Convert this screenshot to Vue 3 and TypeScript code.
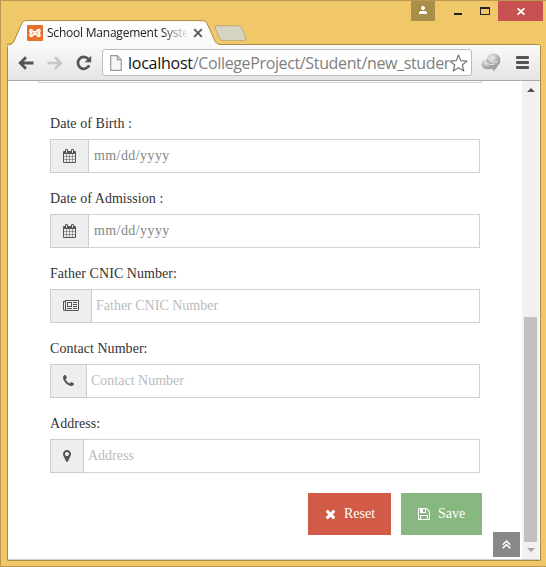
<script setup lang="ts">
interface Icon {
  box: string
  width: number
  path: string
}

interface Field {
  id: string
  label: string
  placeholder: string
  icon: Icon
  date?: boolean
}

const calendar: Icon = {
  box: '64 0 1664 1792',
  width: 13,
  path: 'M192 1664h288v-288h-288v288zm352 0h320v-288h-320v288zm-352-352h288v-320h-288v320zm352 0h320v-320h-320v320zm-352-384h288v-288h-288v288zm736 736h320v-288h-320v288zm-384-736h320v-288h-320v288zm768 736h288v-288h-288v288zm-384-352h320v-320h-320v320zm-352-864v-288q0-13-9.5-22.5t-22.5-9.5h-64q-13 0-22.5 9.5t-9.5 22.5v288q0 13 9.5 22.5t22.5 9.5h64q13 0 22.5-9.5t9.5-22.5zm736 864h288v-320h-288v320zm-384-384h320v-288h-320v288zm384 0h288v-288h-288v288zm32-480v-288q0-13-9.5-22.5t-22.5-9.5h-64q-13 0-22.5 9.5t-9.5 22.5v288q0 13 9.5 22.5t22.5 9.5h64q13 0 22.5-9.5t9.5-22.5zm384-64v1280q0 52-38 90t-90 38h-1408q-52 0-90-38t-38-90v-1280q0-52 38-90t90-38h128v-96q0-66 47-113t113-47h64q66 0 113 47t47 113v96h384v-96q0-66 47-113t113-47h64q66 0 113 47t47 113v96h128q52 0 90 38t38 90z',
}
const newspaper: Icon = {
  box: '0 0 2048 1792',
  width: 16,
  path: 'M1024 512h-384v384h384v-384zm128 640v128h-640v-128h640zm0-768v640h-640v-640h640zm640 768v128h-512v-128h512zm0-256v128h-512v-128h512zm0-256v128h-512v-128h512zm0-256v128h-512v-128h512zm-1536 960v-960h-128v960q0 26 19 45t45 19 45-19 19-45zm1664 0v-1088h-1536v1088q0 33-11 64h1483q26 0 45-19t19-45zm128-1216v1216q0 80-56 136t-136 56h-1664q-80 0-136-56t-56-136v-1088h256v-128h1792z',
}
const phone: Icon = {
  box: '192 0 1408 1792',
  width: 11,
  path: 'M1600 1240q0 27-10 70.5t-21 68.5q-21 50-122 106-94 51-186 51-27 0-53-3.5t-57.5-12.5-47-14.5-55.5-20.5-49-18q-98-35-175-83-127-79-264-216t-216-264q-48-77-83-175-3-9-18-49t-20.5-55.5-14.5-47-12.5-57.5-3.5-53q0-92 51-186 56-101 106-122 25-11 68.5-21t70.5-10q14 0 21 3 18 6 53 76 11 19 30 54t35 63.5 31 53.5q3 4 17.5 25t21.5 35.5 7 28.5q0 20-28.5 50t-62 55-62 53-28.5 46q0 9 5 22.5t8.5 20.5 14 24 11.5 19q76 137 174 235t235 174q2 1 19 11.5t24 14 20.5 8.5 22.5 5q18 0 46-28.5t53-62 55-62 50-28.5q14 0 28.5 7t35.5 21.5 25 17.5q25 15 53.5 31t63.5 35 54 30q70 35 76 53 3 7 3 21z',
}
const marker: Icon = {
  box: '384 0 1024 1792',
  width: 8,
  path: 'M1152 640q0-106-75-181t-181-75-181 75-75 181 75 181 181 75 181-75 75-181zm256 0q0 109-33 179l-364 774q-16 33-47.5 52t-67.5 19-67.5-19-46.5-52l-365-774q-33-70-33-179 0-212 150-362t362-150 362 150 150 362z',
}

const fields: Field[] = [
  { id: 'dob', label: 'Date of Birth :', placeholder: 'mm/dd/yyyy', icon: calendar, date: true },
  { id: 'doa', label: 'Date of Admission :', placeholder: 'mm/dd/yyyy', icon: calendar, date: true },
  { id: 'cnic', label: 'Father CNIC Number:', placeholder: 'Father CNIC Number', icon: newspaper },
  { id: 'contact', label: 'Contact Number:', placeholder: 'Contact Number', icon: phone },
  { id: 'address', label: 'Address:', placeholder: 'Address', icon: marker },
]
</script>

<template>
  <div class="window">
    <header class="titlebar">
      <div class="tab">
        <svg class="tab-shape" width="214" height="26" viewBox="0 0 214 26">
          <defs>
            <linearGradient id="tabFill" x1="0" y1="0" x2="0" y2="1">
              <stop offset="0" stop-color="#ffffff" />
              <stop offset="1" stop-color="#f8f8f8" />
            </linearGradient>
          </defs>
          <path d="M0 25.5C5 25 6.500 23.500 7.500 21L14.500 4Q15.500 .6 19 .6H195.500Q199 .6 200.300 4L207.500 20Q209 24.500 214 24.500V26H0Z" fill="url(#tabFill)" />
          <path d="M0 24.500C5 24 6.500 22.500 7.500 20L14.500 4Q15.500 .6 19 .6H195.500Q199 .6 200.300 4L207.500 20Q209 24.500 214 24.500" fill="none" stroke="#a98b46" />
        </svg>
        <svg class="favicon" width="16" height="16" viewBox="0 0 16 16">
          <rect width="16" height="16" rx="1" fill="#e8702a" />
          <path d="M5.500 6.200C5.500 4.600 3.200 4.200 3.200 6C3.200 7.300 4.200 7.200 4.700 8C4.200 8.800 3.200 8.700 3.200 10C3.200 11.800 5.500 11.400 6 10C6.500 8.600 9.500 8.600 10 10C10.500 11.400 12.800 11.800 12.800 10C12.800 8.700 11.800 8.800 11.300 8C11.800 7.200 12.800 7.300 12.800 6C12.800 4.200 10.500 4.600 10 6C9.500 7.400 6.500 7.400 6 6" fill="none" stroke="#fff" stroke-width="1.900" stroke-linejoin="round" />
        </svg>
        <span class="tab-title">School Management System</span>
        <svg class="tab-close" width="10" height="10" viewBox="0 0 10 10">
          <path d="M1.200 1.200L8.800 8.800M8.800 1.200L1.200 8.800" stroke="#5a5a5a" stroke-width="1.900" />
        </svg>
      </div>
      <svg class="new-tab" width="33" height="17" viewBox="0 0 33 17">
        <path d="M3 .7H24.500Q26.800 .7 27.800 3L31.600 12.500Q32.300 15.400 30 15.400H9Q6.300 15.400 5.300 13L1.200 3Q.5 .7 3 .7Z" fill="#d8d4c4" stroke="#bda976" />
      </svg>
      <div class="controls">
        <div class="user">
          <svg width="8" height="8" viewBox="0 0 8 8" shape-rendering="crispEdges">
            <path d="M3 0H5V1H6V3H5V4H3V3H2V1H3ZM1 5H7V6H8V8H0V6H1Z" fill="#fff" />
          </svg>
        </div>
        <i class="minimise"></i>
        <i class="maximise"></i>
        <div class="close">
          <svg width="8" height="7" viewBox="0 0 8 7">
            <path d="M.6 .3L7.400 6.700M7.400 .3L.6 6.700" stroke="#fff" stroke-width="1.700" />
          </svg>
        </div>
      </div>
    </header>

    <div class="browser">
      <nav class="toolbar">
        <svg class="back" width="16" height="14" viewBox="0 0 16 14">
          <path d="M15.500 7H2.500M8 1.200L2.200 7L8 12.800" fill="none" stroke="#555" stroke-width="2.800" />
        </svg>
        <svg class="forward" width="16" height="14" viewBox="0 0 16 14">
          <path d="M.5 7H13.500M8 1.200L13.800 7L8 12.800" fill="none" stroke="#c6c6c6" stroke-width="2.600" />
        </svg>
        <svg class="reload" width="16" height="16" viewBox="0 0 16 16">
          <path d="M13.200 10.300A5.900 5.900 0 1 1 12.300 4" fill="none" stroke="#555" stroke-width="2.700" />
          <path d="M15.200 .8V7.200H8.700Z" fill="#555" />
        </svg>
        <div class="omnibox">
          <svg class="page-icon" width="12" height="16" viewBox="0 0 12 16">
            <path d="M.7 .7H7.300L11.300 4.700V15.300H.7ZM7.300 .7V4.700H11.300" fill="#f7f7f7" stroke="#999" stroke-width="1.200" />
          </svg>
          <span class="url"><b>localhost</b>/CollegeProject/Student/new_student</span>
          <svg class="star" width="19" height="18" viewBox="0 0 19 18">
            <path d="M9.500 1L11.800 6.700L18 7.100L13.300 11L14.800 17L9.500 13.700L4.200 17L5.700 11L1 7.100L7.200 6.700Z" fill="#fff" stroke="#777" stroke-width="1.200" stroke-linejoin="round" />
          </svg>
        </div>
        <svg class="extension" width="20" height="19" viewBox="0 0 20 19">
          <defs>
            <radialGradient id="orb" cx=".4" cy=".3" r=".75">
              <stop offset="0" stop-color="#eeeeee" />
              <stop offset=".5" stop-color="#b9b9b9" />
              <stop offset="1" stop-color="#8d8d8d" />
            </radialGradient>
          </defs>
          <ellipse cx="7" cy="11.500" rx="6.500" ry="4.800" fill="url(#orb)" />
          <circle cx="12.500" cy="7.300" r="6.800" fill="url(#orb)" />
          <path d="M10 13H17L12.500 18.500Z" fill="#a2a2a2" />
          <path d="M4 8Q7 13 14 11M7 4Q8 10 17 9" stroke="#e6e6e6" fill="none" />
        </svg>
        <div class="menu"><i></i><i></i><i></i></div>
      </nav>

      <div class="viewport">
        <main class="page">
          <div class="previous"></div>
          <form class="form" @submit.prevent>
            <div v-for="f in fields" :key="f.id" class="field">
              <label :for="f.id">{{ f.label }}</label>
              <div class="group">
                <span class="addon">
                  <svg :width="f.icon.width" height="14" :viewBox="f.icon.box"><path :d="f.icon.path" fill="#555" /></svg>
                </span>
                <input :id="f.id" type="text" :class="{ date: f.date }" :placeholder="f.placeholder" />
              </div>
            </div>
            <div class="actions">
              <button type="reset" class="reset">
                <svg width="11" height="14" viewBox="192 0 1408 1792">
                  <path fill="#fff" d="M1490 1322q0 40-28 68l-136 136q-28 28-68 28t-68-28l-294-294-294 294q-28 28-68 28t-68-28l-136-136q-28-28-28-68t28-68l294-294-294-294q-28-28-28-68t28-68l136-136q28-28 68-28t68 28l294 294 294-294q28-28 68-28t68 28l136 136q28 28 28 68t-28 68l-294 294 294 294q28 28 28 68z" />
                </svg>
                <span>Reset</span>
              </button>
              <button type="submit" class="save">
                <svg width="12" height="14" viewBox="128 0 1536 1792">
                  <path fill="#fff" d="M512 1536h768v-384h-768v384zm896 0h128v-896q0-14-10-38.5t-20-34.5l-281-281q-10-10-34-20t-39-10v416q0 40-28 68t-68 28h-576q-40 0-68-28t-28-68v-416h-128v1280h128v-416q0-40 28-68t68-28h832q40 0 68 28t28 68v416zm-384-928v-320q0-13-9.5-22.5t-22.5-9.5h-192q-13 0-22.5 9.5t-9.5 22.5v320q0 13 9.5 22.5t22.5 9.5h192q13 0 22.5-9.5t9.5-22.5zm640 32v928q0 40-28 68t-68 28h-1344q-40 0-68-28t-28-68v-1344q0-40 28-68t68-28h928q40 0 88 20t76 48l280 280q28 28 48 76t20 88z" />
                </svg>
                <span>Save</span>
              </button>
            </div>
          </form>
          <a class="to-top">
            <svg width="9" height="9" viewBox="0 0 9 9">
              <path d="M.7 4.700L4.500 1L8.300 4.700M.7 8.300L4.500 4.600L8.300 8.300" fill="none" stroke="#fff" stroke-width="1.500" />
            </svg>
          </a>
        </main>
        <div class="scrollbar">
          <svg width="8" height="4" viewBox="0 0 8 4"><path d="M4 0L8 4H0Z" fill="#505050" /></svg>
          <div class="thumb"></div>
          <svg width="8" height="4" viewBox="0 0 8 4"><path d="M0 0H8L4 4Z" fill="#a3a3a3" /></svg>
        </div>
      </div>
    </div>
  </div>
</template>

<style>
body {
  overflow: hidden;
}
</style>

<style scoped>
* {
  box-sizing: border-box;
}
svg {
  display: block;
  flex: none;
}
.window {
  width: 546px;
  height: 567px;
  padding: 0 5px 5px 6px;
  display: flex;
  flex-direction: column;
  background: #f0c869;
  border: 1px solid #b9984f;
  border-right: 0;
}
.titlebar {
  height: 43px;
  flex: none;
  display: flex;
  align-items: flex-start;
}
.tab {
  position: relative;
  z-index: 1;
  width: 214px;
  height: 26px;
  margin-top: 19px;
  padding-left: 20px;
  flex: none;
  display: flex;
  align-items: center;
}
.tab-shape {
  position: absolute;
  left: 0;
  top: 0;
}
.favicon {
  position: relative;
}
.tab-title {
  position: relative;
  width: 140px;
  margin-left: 4px;
  overflow: hidden;
  white-space: nowrap;
  font: 12px/18px "Open Sans", sans-serif;
  letter-spacing: -0.22px;
  color: #222;
  mask-image: linear-gradient(90deg, #000 115px, transparent 142px);
}
.tab-close {
  position: relative;
  margin-left: 6px;
}
.new-tab {
  margin: 24px 0 0 -7px;
}
.controls {
  display: flex;
  margin-left: auto;
  margin-right: -2px;
}
.user {
  width: 24px;
  height: 20px;
  padding: 5px 8px;
  background: #a98e4a;
}
.minimise {
  width: 8px;
  height: 2px;
  margin: 12px 0 0 19px;
  background: #222;
}
.maximise {
  width: 10px;
  height: 8px;
  margin: 6px 8px 0 18px;
  border: 1px solid #222;
  border-top-width: 2px;
}
.close {
  width: 45px;
  height: 20px;
  display: flex;
  align-items: center;
  justify-content: center;
  background: #c75050;
}
.browser {
  flex: 1;
  min-height: 0;
  display: flex;
  flex-direction: column;
  border: 1px solid #a98b46;
  border-radius: 3px 3px 1px 1px;
  background: #fff;
}
.toolbar {
  height: 36px;
  flex: none;
  display: flex;
  align-items: center;
  padding: 0 10px;
  border-bottom: 1px solid #a9a9a9;
  border-radius: 2px 2px 0 0;
  background: linear-gradient(#fafafa, #e4e4e4);
}
.forward {
  margin-left: 13px;
}
.reload {
  margin-left: 13px;
}
.omnibox {
  width: 370px;
  height: 27px;
  flex: none;
  margin-left: 10px;
  padding: 0 3px 0 7px;
  display: flex;
  align-items: center;
  border: 1px solid #bdbdbd;
  border-radius: 3px;
  background: #fff;
}
.url {
  width: 321px;
  margin-left: 6px;
  overflow: hidden;
  white-space: nowrap;
  font: 16px/24px "Open Sans", sans-serif;
  letter-spacing: -0.36px;
  color: #808080;
}
.url b {
  font-weight: 400;
  letter-spacing: -0.25px;
  color: #111;
}
.extension {
  margin-left: 9px;
}
.menu {
  width: 13px;
  flex: none;
  margin-left: 15px;
  display: grid;
  gap: 2px;
}
.menu i {
  height: 3px;
  border-radius: 1px;
  background: #555;
}
.viewport {
  flex: 1;
  min-height: 0;
  display: flex;
  padding-right: 1px;
  border-bottom: 1px solid #d0d0d0;
}
.page {
  position: relative;
  flex: 1;
  padding: 0 40px 0 30px;
  font: 14px/20px "Liberation Serif", "Times New Roman", serif;
  color: #333;
}
.previous {
  height: 2px;
  border: 1px solid #d5d5d5;
  border-top: 0;
}
.form {
  padding: 31px 2px 0 12px;
}
.field {
  margin-bottom: 16px;
}
.field label {
  display: block;
  margin-bottom: 5px;
  letter-spacing: 0.05px;
}
.group {
  height: 34px;
  display: flex;
}
.addon {
  padding: 0 12px;
  display: flex;
  align-items: center;
  border: 1px solid #ccc;
  background: #eee;
}
.group input {
  flex: 1;
  min-width: 0;
  margin: 0;
  padding: 0 4px;
  border: 1px solid #d2d2d2;
  border-left: 0;
  border-radius: 0;
  background: #fff;
  font: inherit;
}
.group input::placeholder {
  color: #bbb;
  opacity: 1;
}
.group .date {
  padding-left: 5px;
  letter-spacing: 0.42px;
}
.group .date::placeholder {
  color: #858585;
}
.actions {
  display: flex;
  justify-content: flex-end;
  gap: 10px;
  margin: 20px -2px 0 0;
}
.actions button {
  height: 42px;
  padding: 0 17px;
  display: flex;
  align-items: center;
  gap: 8px;
  border: 0;
  font: inherit;
  color: #fff;
}
.actions .reset {
  width: 83px;
  background: #d15b47;
}
.actions .save {
  width: 81px;
  background: #87b87f;
}
.to-top {
  position: absolute;
  right: 2px;
  bottom: 2px;
  width: 27px;
  height: 25px;
  display: flex;
  align-items: center;
  justify-content: center;
  background: #888;
}
.scrollbar {
  width: 17px;
  flex: none;
  display: flex;
  flex-direction: column;
  align-items: center;
  padding: 7px 0;
  background: #f1f1f1;
}
.thumb {
  width: 13px;
  height: 225px;
  margin: auto 0 6px;
  background: #c1c1c1;
}
</style>
